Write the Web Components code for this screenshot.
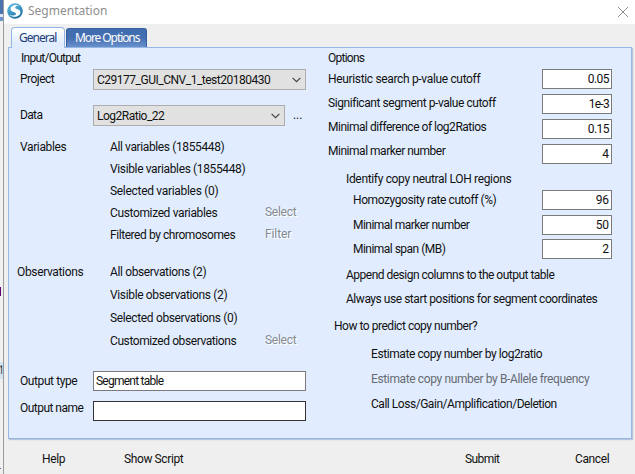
<!DOCTYPE html>
<html lang="en"><head><meta charset="utf-8"><title>Segmentation</title>
<style>body{margin:0;width:635px;height:474px;overflow:hidden;background:#efefef}</style></head>
<body><seg-dialog></seg-dialog>
<script>
const define=(name,html,init)=>customElements.define(name,class extends HTMLElement{
  connectedCallback(){if(this.shadowRoot)return;const t=document.createElement('template');t.innerHTML=html;
    this.attachShadow({mode:'open'}).append(t.content.cloneNode(true));if(init)init.call(this,this.shadowRoot);}
});
/* One line of text, tracked so that it fills the width given in "w". */
define('ui-text',`<style>:host{display:block;white-space:nowrap;height:16px;line-height:16px;flex:none}span{display:inline-block}</style><span><slot></slot></span>`,function(r){
  const s=r.querySelector('span'),w=+this.getAttribute('w'),n=this.textContent.length;
  if(w&&n>1){const d=(w-.7-s.getBoundingClientRect().width)/n;s.style.letterSpacing=d.toFixed(3)+'px';}
});
define('ui-row',`<style>:host{display:flex;align-items:flex-start;box-sizing:border-box}</style><slot></slot>`);
define('ui-stack',`<style>:host{display:flex;flex-direction:column;flex:none}</style><slot></slot>`);
define('ui-field',`<style>:host{display:flex;box-sizing:border-box;height:20px;border:1px solid #7a7a7a;background:#fff;padding:1px 2px;flex:none}:host([right]){justify-content:flex-end;width:70px}:host([focus]){border-color:#333}</style><slot></slot>`);
define('ui-combo',`<style>:host{display:flex;justify-content:space-between;align-items:center;box-sizing:border-box;height:21px;border:1px solid #adadad;background:#e1e1e1;padding:1px 4px 0 3px;flex:none}svg{display:block}</style><slot></slot><svg width="9" height="6" viewBox="0 0 9 6"><path d="M.6 .8 4.5 4.7 8.4 .8" fill="none" stroke="#444" stroke-width="1.2"/></svg>`);
define('ui-tab',`<style>:host{display:block;box-sizing:border-box;height:19px;padding:1px 0 0 8px;width:81px;border:1px solid #345f9f;border-bottom:0;border-radius:3px 3px 0 0;background:linear-gradient(#3f6db0,#446fb2 50%,#6990cc);color:#fff}:host([active]){height:21px;width:54px;padding:2px 0 0 7px;background:linear-gradient(#fff,#e1edff 75%);border-color:#93b5e5;color:#1e3c78;border-radius:4px 4px 0 0;margin-bottom:-1px;z-index:1}</style><slot></slot>`);
define('app-logo',`<style>:host{display:block;width:16px;height:16px}svg{display:block}</style><svg width="16" height="16" viewBox="0 0 16 16"><defs><linearGradient id="g" x1=".2" x2=".7" y2="1"><stop stop-color="#62bce2"/><stop offset=".55" stop-color="#3a93c0"/><stop offset="1" stop-color="#1c6a97"/></linearGradient></defs><circle cx="8" cy="8" r="7.800" fill="url(#g)"/><path d="M12.300 2.600C8 .9 3.600 2.800 3.600 6.100 3.600 9.600 9 8.900 9 11.100c0 1.500-3.300 2.100-6.800.6 3.800 3.500 11.200 2.300 11.200-2.500C13.400 5.700 8.200 6.600 8.200 4.600c0-1.300 2-2 4.100-2z" fill="#fff"/></svg>`);
define('title-bar',`<style>:host{display:flex;align-items:center;justify-content:space-between;height:24px;background:#fff;padding:0 6px 0 3px;color:#8e8e8e;font:12px "Noto Sans",sans-serif}div{display:flex;gap:5px;align-items:center;margin-top:-2px}svg{display:block;margin-top:-1px}</style><div><app-logo></app-logo><ui-text w="75"><slot></slot></ui-text></div><svg width="12" height="12" viewBox="0 0 12 12"><path d="M1 1 11 11M11 1 1 11" stroke="#8c8c8c" fill="none"/></svg>`);
define('back-edge',`<style>:host{display:block;width:3px;border-right:1px solid #9b9b9b;flex:none;overflow:hidden;height:474px;color:#222;font-weight:700}i{display:block}ui-text{width:7px;font-style:normal;transform:scaleX(.42);transform-origin:0 0}</style>
<i style="height:14px;background:#4a73b0"></i><i style="height:3px;background:#dbe7f5"></i><i style="height:4px;background:#6a93ce"></i><i style="height:266px;background:#f0f0f0"></i><i style="height:9px;width:1px;background:#600070"></i><i style="height:66px;background:#f0f0f0"></i><i style="height:17px;background:#cfe3f2"><ui-text>1</ui-text></i><i style="height:89px;background:#f0f0f0"></i><i style="height:1px;width:1px;background:#4a73b0"></i>`);
define('input-side',`<style>:host{display:block;width:308px;padding:2px 0 0 11px;box-sizing:border-box}
.l{width:73px;flex:none}.a{color:#858a92;text-shadow:1px 1px #fff}</style>
<ui-text w="60" style="margin-left:1px;height:19px">Input/Output</ui-text>
<ui-row style="height:36px"><ui-text class="l" w="35" style="margin-top:2px">Project</ui-text><ui-combo style="width:213px"><ui-text w="174">C29177_GUI_CNV_1_test20180430</ui-text></ui-combo></ui-row>
<ui-row style="height:34px"><ui-text class="l" w="23" style="margin-top:2px">Data</ui-text><ui-combo style="width:192px"><ui-text w="68">Log2Ratio_22</ui-text></ui-combo><ui-text w="10" style="margin:2px 0 0 8px">...</ui-text></ui-row>
<ui-row style="height:125px"><ui-text style="width:90px" w="47">Variables</ui-text><ui-stack style="gap:6px;width:155px"><ui-text w="115">All variables (1855448)</ui-text><ui-text w="136">Visible variables (1855448)</ui-text><ui-text w="109">Selected variables (0)</ui-text><ui-text w="108">Customized variables</ui-text><ui-text w="126">Filtered by chromosomes</ui-text></ui-stack><ui-stack class="a" style="gap:6px;margin-top:65px"><ui-text w="32">Select</ui-text><ui-text w="27">Filter</ui-text></ui-stack></ui-row>
<ui-row style="height:107px;margin-left:-3px"><ui-text style="width:93px" w="67">Observations</ui-text><ui-stack style="gap:7px;width:155px"><ui-text w="97">All observations (2)</ui-text><ui-text w="118">Visible observations (2)</ui-text><ui-text w="128">Selected observations (0)</ui-text><ui-text w="127">Customized observations</ui-text></ui-stack><ui-text class="a" style="margin-top:68px" w="32">Select</ui-text></ui-row>
<ui-row style="height:30px"><ui-text class="l" w="58" style="margin-top:2px">Output type</ui-text><ui-field style="width:213px"><ui-text w="68">Segment table</ui-text></ui-field></ui-row>
<ui-row><ui-text class="l" w="64" style="margin-top:-1px">Output name</ui-text><ui-field focus style="width:213px"></ui-field></ui-row>`);
define('option-side',`<style>:host{display:block;flex:1;padding:2px 19px 0 11px}
ui-row{justify-content:space-between}.in{padding-left:25px}.sub{margin-left:18px}.off{color:#676b72}</style>
<ui-text w="37" style="height:19px">Options</ui-text>
<ui-row><ui-stack style="gap:8px;margin-top:2px"><ui-text w="153">Heuristic search p-value cutoff</ui-text><ui-text w="168">Significant segment p-value cutoff</ui-text><ui-text w="159">Minimal difference of log2Ratios</ui-text><ui-text w="118">Minimal marker number</ui-text></ui-stack><ui-stack style="gap:5px"><ui-field right><ui-text w="22">0.05</ui-text></ui-field><ui-field right><ui-text w="21">1e-3</ui-text></ui-field><ui-field right><ui-text w="22">0.15</ui-text></ui-field><ui-field right><ui-text>4</ui-text></ui-field></ui-stack></ui-row>
<ui-text class="sub" w="166" style="margin-top:7px;height:19px">Identify copy neutral LOH regions</ui-text>
<ui-row class="in"><ui-stack style="gap:8.500px;margin-top:2px"><ui-text w="144">Homozygosity rate cutoff (%)</ui-text><ui-text w="117">Minimal marker number</ui-text><ui-text w="93">Minimal span (MB)</ui-text></ui-stack><ui-stack style="gap:4.500px"><ui-field right><ui-text w="14">96</ui-text></ui-field><ui-field right><ui-text w="14">50</ui-text></ui-field><ui-field right><ui-text>2</ui-text></ui-field></ui-stack></ui-row>
<ui-stack class="sub" style="gap:8px;margin-top:8px"><ui-text w="209">Append design columns to the output table</ui-text><ui-text w="252">Always use start positions for segment coordinates</ui-text></ui-stack>
<ui-text w="144" style="margin:11px 0 12px 6px">How to predict copy number?</ui-text>
<ui-stack style="gap:9px;margin-left:43px"><ui-text w="172">Estimate copy number by log2ratio</ui-text><ui-text class="off" w="219">Estimate copy number by B-Allele frequency</ui-text><ui-text w="186">Call Loss/Gain/Amplification/Deletion</ui-text></ui-stack>`);
define('seg-dialog',`<style>:host{display:flex;width:635px;height:474px;font:12px Roboto,"Liberation Sans",sans-serif;color:#111;background:#efefef}
main{flex:1;min-width:0}nav{display:flex;align-items:flex-end;height:23px;padding-left:7px;font:12px "Noto Sans",sans-serif;gap:1px}
section{display:flex;box-sizing:border-box;width:624px;height:392px;margin-left:4px;background:#e1edff;border:1px solid #94b7e4;box-shadow:1px 1px 1px #b9c6da}
footer{display:grid;grid-template-columns:82px 341px 110px 40px;padding:12px 0 0 38px}</style>
<back-edge></back-edge><main><title-bar>Segmentation</title-bar>
<nav><ui-tab active><ui-text w="38">General</ui-text></ui-tab><ui-tab><ui-text w="65">More Options</ui-text></ui-tab></nav>
<section><input-side></input-side><option-side></option-side></section>
<footer><ui-text w="24">Help</ui-text><ui-text w="60">Show Script</ui-text><ui-text w="35">Submit</ui-text><ui-text w="35">Cancel</ui-text></footer></main>`);
</script></body></html>
